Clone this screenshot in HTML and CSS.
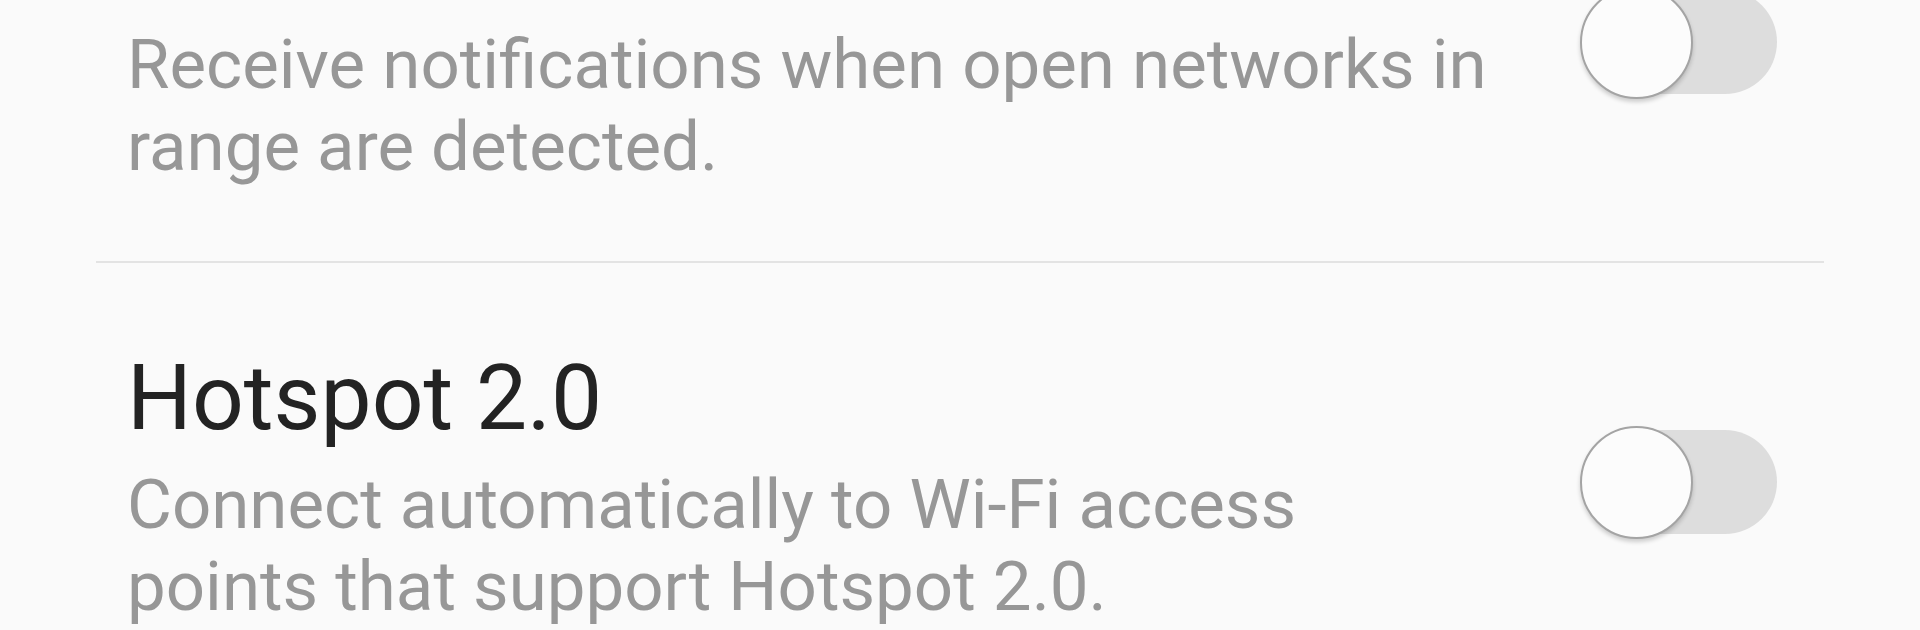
FILE: index.html
```html
<!DOCTYPE html>
<html lang="en">
<head>
<meta charset="utf-8">
<title>Wi-Fi settings</title>
<link rel="stylesheet" href="styles.css">
</head>
<body>
<div class="list">
  <div class="row row-first">
    <div class="text">
      <p class="desc">Receive notifications when open networks in range are detected.</p>
    </div>
    <div class="switch switch-first">
      <span class="track"></span>
      <span class="thumb"></span>
    </div>
  </div>
  <div class="row">
    <div class="text">
      <h2 class="title">Hotspot 2.0</h2>
      <p class="desc">Connect automatically to Wi-Fi access points that support Hotspot 2.0.</p>
    </div>
    <div class="switch switch-second">
      <span class="track"></span>
      <span class="thumb"></span>
    </div>
  </div>
</div>
</body>
</html>
```

FILE: styles.css
```css
html, body {
  margin: 0;
  padding: 0;
  background: #fafafa;
}

body {
  font-family: Roboto, "Noto Sans", sans-serif;
  overflow: hidden;
}

.list {
  padding: 0 96px;
}

.row {
  display: flex;
  align-items: center;
  padding: 81px 47px 73px 31px;
}

.row + .row {
  border-top: 2px solid #e3e3e3;
}

.row-first {
  align-items: flex-start;
  padding-top: 24px;
}

.text {
  flex: 1;
  min-width: 0;
  margin-right: 88px;
}

.title {
  margin: 0 0 11px;
  font-size: 91px;
  line-height: 109px;
  font-weight: 400;
  color: #232323;
}

.desc {
  margin: 0;
  font-size: 69px;
  line-height: 82px;
  color: #979797;
}

.switch {
  position: relative;
  flex: none;
  width: 197px;
  height: 113px;
}

.switch-first {
  margin-top: -38px;
}

.switch-second {
  margin-bottom: 8px;
}

.track {
  position: absolute;
  left: 8px;
  right: 0;
  top: 4px;
  height: 104px;
  border-radius: 52px;
  background: #dddddd;
}

.thumb {
  position: absolute;
  left: 0;
  top: 0;
  width: 109px;
  height: 109px;
  border-radius: 50%;
  background: #fcfcfc;
  border: 2px solid #a4a4a4;
  box-shadow: 0 3px 4px rgba(0, 0, 0, 0.18);
}
```
